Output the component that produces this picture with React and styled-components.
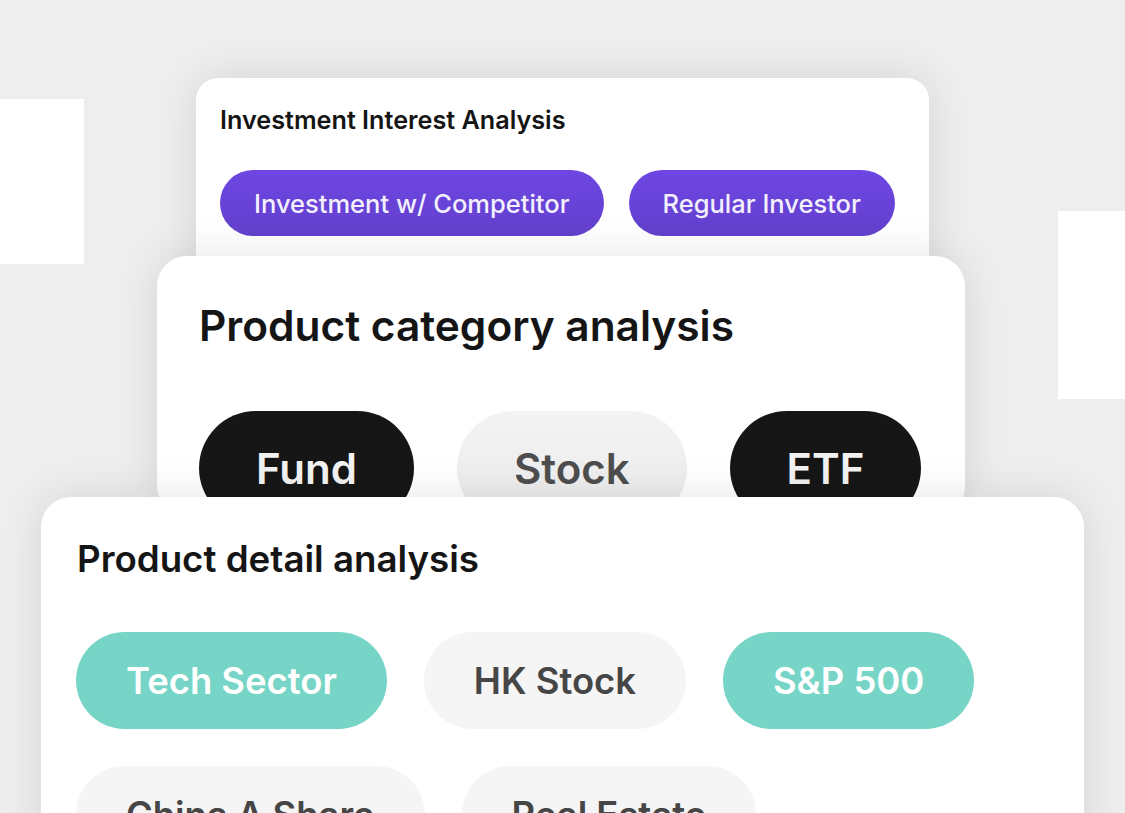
import React from "react"
import styled, { createGlobalStyle } from "styled-components"

const GlobalStyle = createGlobalStyle`
  html, body {
    margin: 0;
    padding: 0;
    background: #eeeeee;
    overflow: hidden;
  }
  body {
    font-family: Inter, "Noto Sans", "Liberation Sans", sans-serif;
    -webkit-font-smoothing: antialiased;
  }
`

const Stage = styled.div`
  position: relative;
  width: 1125px;
  height: 813px;
  overflow: hidden;
  background: #eeeeee;
  display: flex;
  flex-direction: column;
  align-items: flex-start;
  padding-top: 78px;
  box-sizing: border-box;
`

// neighbouring carousel cards peeking in from the sides
const Peek = styled.div`
  position: absolute;
  top: ${p => p.$top}px;
  left: ${p => p.$left}px;
  width: ${p => p.$width}px;
  height: ${p => p.$height}px;
  background: #ffffff;
`

const Card = styled.section`
  position: relative;
  flex-shrink: 0;
  box-sizing: border-box;
  margin-left: ${p => p.$offset}px;
  margin-top: ${p => p.$overlap || 0}px;
  width: ${p => p.$width}px;
  height: ${p => p.$height}px;
  padding: ${p => p.$pad};
  border-radius: ${p => p.$radius}px;
  background: #ffffff;
  box-shadow: 0 0 44px rgba(0, 0, 0, 0.11);
  overflow: hidden;
`

const Title = styled.h2`
  margin: 0;
  color: #151515;
  font-size: ${p => p.$size}px;
  line-height: ${p => p.$line}px;
  font-weight: 600;
  white-space: nowrap;
`

const PillRow = styled.div`
  display: flex;
  flex-wrap: wrap;
  gap: ${p => p.$gap}px;
  margin-top: ${p => p.$top}px;
  margin-left: ${p => p.$shift || 0}px;
`

const tones = {
  purple: "background: linear-gradient(180deg, #6e46e3 0%, #6340cd 100%); color: #f3f0fd;",
  dark: "background: #161616; color: #f2f2f2;",
  light: "background: linear-gradient(180deg, #f3f3f3 0%, #ebebeb 100%); color: #4e4e4e;",
  teal: "background: #76d5c6; color: #ffffff;",
  soft: "background: #f5f5f5; color: #464646;",
}

const Pill = styled.div`
  display: inline-flex;
  align-items: center;
  justify-content: center;
  box-sizing: border-box;
  height: ${p => p.$h}px;
  padding: 0 ${p => p.$px}px;
  border-radius: ${p => p.$h / 2}px;
  font-size: ${p => p.$size}px;
  font-weight: ${p => p.$weight || 600};
  white-space: nowrap;
  ${p => tones[p.$tone]}
`

export default function App() {
  return (
    <>
      <GlobalStyle />
      <Stage>
        <Peek $left={0} $top={99} $width={84} $height={165} />
        <Peek $left={1058} $top={211} $width={67} $height={188} />

        <Card $offset={196} $width={733} $height={200} $radius={22} $pad="27px 24px">
          <Title $size={25.2} $line={30}>
            Investment Interest Analysis
          </Title>
          <PillRow $gap={25} $top={35}>
            <Pill $tone="purple" $h={66} $px={34} $size={25.5} $weight={500}>
              Investment w/ Competitor
            </Pill>
            <Pill $tone="purple" $h={66} $px={34} $size={25.5} $weight={500}>
              Regular Investor
            </Pill>
          </PillRow>
        </Card>

        <Card $offset={157} $overlap={-22} $width={808} $height={260} $radius={30} $pad="45px 42px">
          <Title $size={42.4} $line={50}>
            Product category analysis
          </Title>
          <PillRow $gap={43} $top={60}>
            <Pill $tone="dark" $h={114} $px={57} $size={42}>Fund</Pill>
            <Pill $tone="light" $h={114} $px={57} $size={42}>Stock</Pill>
            <Pill $tone="dark" $h={114} $px={57} $size={42}>ETF</Pill>
          </PillRow>
        </Card>

        <Card $offset={41} $overlap={-19} $width={1043} $height={420} $radius={30} $pad="40px 36px">
          <Title $size={36.7} $line={44}>
            Product detail analysis
          </Title>
          <PillRow $gap={37} $top={51} $shift={-1}>
            <Pill $tone="teal" $h={97} $px={50} $size={36.4}>Tech Sector</Pill>
            <Pill $tone="soft" $h={97} $px={50} $size={36.4}>HK Stock</Pill>
            <Pill $tone="teal" $h={97} $px={50} $size={36.4}>S&amp;P 500</Pill>
            <Pill $tone="soft" $h={97} $px={50} $size={36.4}>China A Share</Pill>
            <Pill $tone="soft" $h={97} $px={50} $size={36.4}>Real Estate</Pill>
          </PillRow>
        </Card>
      </Stage>
    </>
  )
}
